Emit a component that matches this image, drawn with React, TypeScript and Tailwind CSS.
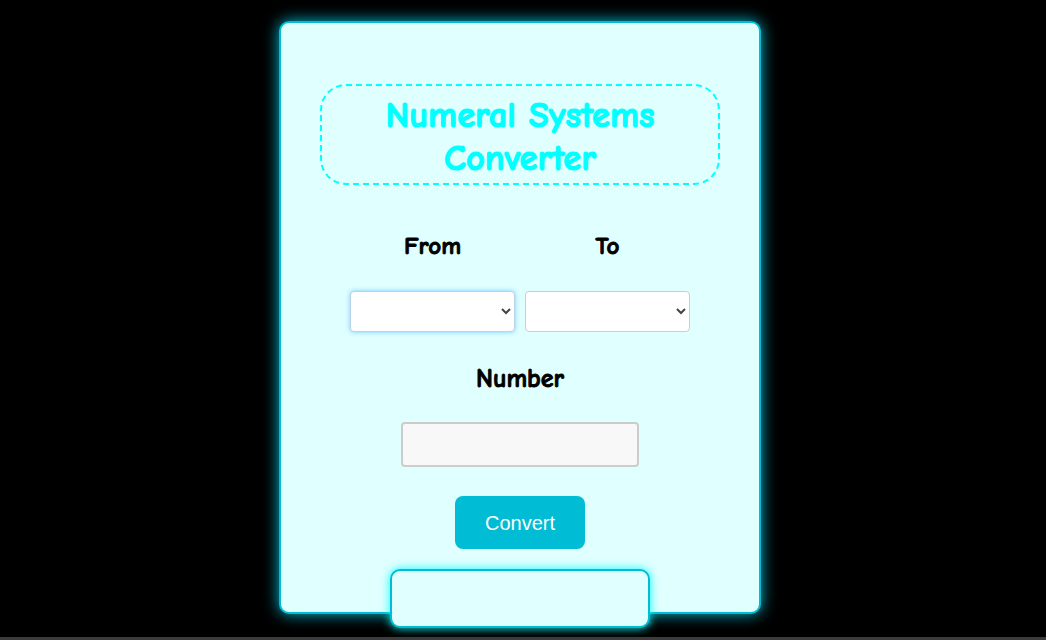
import React, { useState } from 'react';

const comic = { fontFamily: '"Comic Sans MS", "Comic Neue", "Noto Sans", sans-serif' };

const bases = ['', 'Binary', 'Octal', 'Decimal', 'Hexadecimal'];

const App: React.FC = () => {
  const [from, setFrom] = useState('');
  const [to, setTo] = useState('');
  const [num, setNum] = useState('');

  return (
    <div className="bg-black">
      <div className="flex h-[637px] justify-center overflow-hidden pr-[6px] pt-[21px]">
        <div className="flex h-[593px] w-[482px] flex-col items-center rounded-[10px] border-2 border-[#00bcd4] bg-[#e0ffff] shadow-[0_0_15px_#00bcd4]">
          {/* title */}
          <div
            className="mt-[61px] flex h-[101px] w-[400px] shrink-0 items-center justify-center rounded-[26px] border-2 border-dashed border-[#00ffff] pt-[4px] text-center text-[36.5px] font-bold leading-[43px] text-[#00ffff] [-webkit-text-stroke:1.2px_#00ffff]"
            style={comic}>
            Numeral Systems
            <br />
            Converter
          </div>

          {/* from / to */}
          <div className="mt-[46px] flex gap-[10px]" style={comic}>
            <div className="w-[165px] text-center text-[25px] font-bold leading-[30px] text-black [-webkit-text-stroke:0.9px_black]">
              From
            </div>
            <div className="w-[165px] text-center text-[25px] font-bold leading-[30px] text-black [-webkit-text-stroke:0.9px_black]">
              To
            </div>
          </div>
          <div className="mt-[30px] flex gap-[10px]">
            <select
              value={from}
              onChange={(e) => setFrom(e.target.value)}
              className="h-[41px] w-[165px] rounded-[4px] border border-[#b9d3e6] bg-white px-1 text-sm text-[#444] shadow-[0_0_5px_rgba(0,140,255,0.45)]">
              {bases.map((b) => (
                <option key={b} value={b}>
                  {b}
                </option>
              ))}
            </select>
            <select
              value={to}
              onChange={(e) => setTo(e.target.value)}
              className="h-[41px] w-[165px] rounded-[4px] border border-[#cccccc] bg-white px-1 text-sm text-[#444]">
              {bases.map((b) => (
                <option key={b} value={b}>
                  {b}
                </option>
              ))}
            </select>
          </div>

          {/* number */}
          <div
            className="mt-[32px] text-center text-[26px] font-bold leading-[30px] text-black [-webkit-text-stroke:0.9px_black]"
            style={comic}>
            Number
          </div>
          <input
            value={num}
            onChange={(e) => setNum(e.target.value)}
            className="mt-[28px] h-[45px] w-[238px] shrink-0 rounded-[4px] border-2 border-[#cccccc] bg-[#f8f8f8] px-2 outline-none"
          />

          <button className="mt-[29px] h-[53px] w-[130px] shrink-0 rounded-[8px] bg-[#00bcd4] font-['Liberation_Sans',Arial,sans-serif] text-[20px] text-white">
            Convert
          </button>

          {/* result */}
          <div className="mt-[20px] h-[59px] w-[260px] shrink-0 rounded-[10px] border-2 border-[#00bcd4] bg-[#e0ffff] shadow-[0_0_10px_#00ffff]"></div>
        </div>
      </div>
      <div className="h-[3px] bg-[#3c3c3c]"></div>
    </div>
  );
};

export default App;
